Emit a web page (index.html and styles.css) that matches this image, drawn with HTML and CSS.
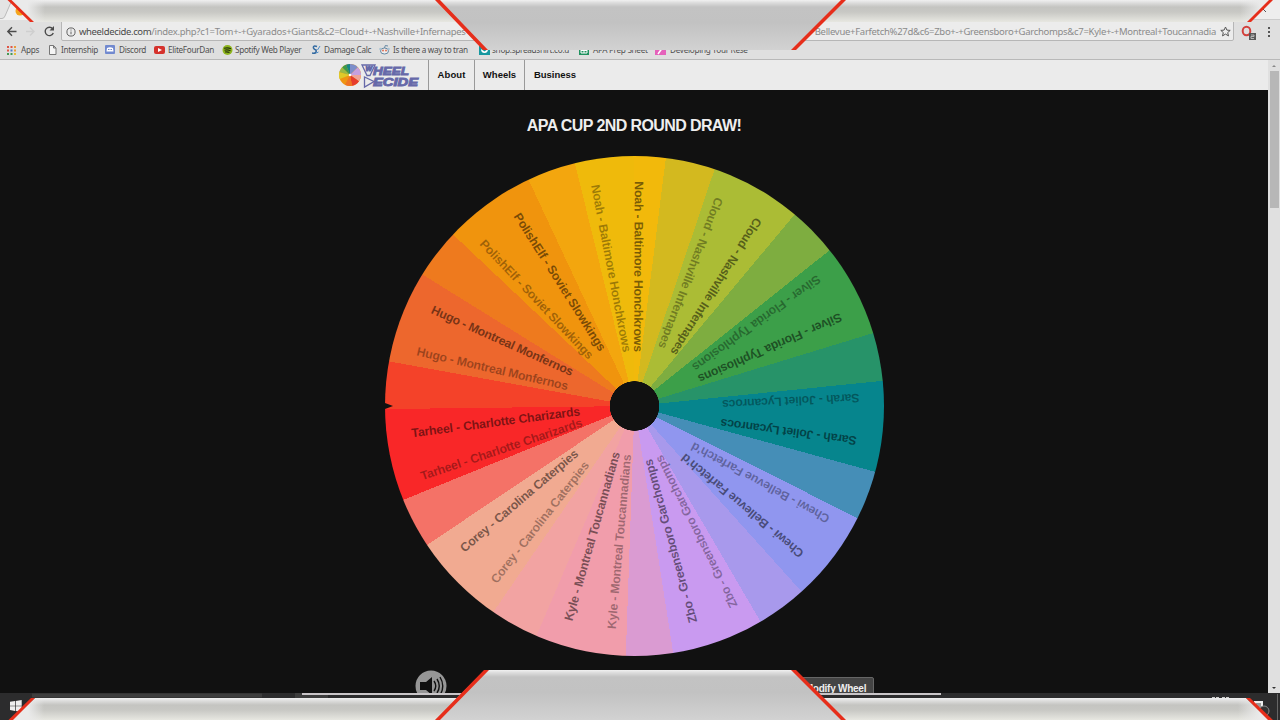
FILE: index.html
```html
<!DOCTYPE html>
<html lang="en">
<head>
<meta charset="utf-8">
<title>Wheel Decide</title>
<link rel="stylesheet" href="styles.css">
</head>
<body>
<div class="screen">
  <header class="browser">
    <div class="tabstrip"><svg width="1280" height="20"><path d="M0 18.500H2Q4 18.500 5 16L12 0H40V20H0Z" fill="#efefef"/><path d="M0 18.500H2Q4 18.500 5 16L12 0" fill="none" stroke="#bbb"/><circle cx="20" cy="11" r="4.500" fill="#f4a51c"/><path d="M1250 0H1280V19H1250Z" fill="#eee"/><path d="M1262 8l4 4" stroke="#555"/><path d="M1245 19.500H1280" stroke="#ccc"/></svg></div>
    <div class="toolbar">
      <svg class="nav-icons" width="60" height="22" fill="none" stroke-width="1.400"><path d="M16.500 11.500H8M12 7.300L7.800 11.500L12 15.700" stroke="#4b4b4b"/><path d="M26 11.500h8M30 7.500l4 4-4 4" stroke="#cfcfcf"/><path d="M52.700 8.800A4.200 4.200 0 1 0 53.300 13" stroke="#4b4b4b"/><path d="M54 6v4.500h-4.500z" fill="#4b4b4b"/></svg>
      <div class="address">
        <svg class="info" width="10" height="10" viewBox="0 0 11 11" fill="none" stroke="#555"><circle cx="5.500" cy="5.500" r="4.500"/><path d="M5.500 5V8M5.500 2.800v1.100"/></svg>
        <span class="url"><b>wheeldecide.com</b>/index.php?c1=Tom+-+Gyarados+Giants&amp;c2=Cloud+-+Nashville+Infernapes</span>
        <span class="url url-end">Bellevue+Farfetch%27d&amp;c6=Zbo+-+Greensboro+Garchomps&amp;c7=Kyle+-+Montreal+Toucannadia</span>
        <svg class="star" width="11" height="11" viewBox="0 0 11 11"><path d="M5.500 1L6.900 4.100 10.200 4.400 7.700 6.600 8.500 9.900 5.500 8.100 2.500 9.900 3.300 6.600.8 4.400 4.100 4.100Z" fill="none" stroke="#555"/></svg>
      </div>
      <svg class="extensions" width="45" height="22"><ellipse cx="12.500" cy="11" rx="3.800" ry="4.300" fill="none" stroke="#d2403c" stroke-width="2"/><rect x="15" y="13" width="7" height="7" fill="#585858"/><path d="M17 15h3v1.500h-3v2h3" stroke="#ccc" fill="none" stroke-width=".8"/><path d="M34 7h2v2h-2zm0 4h2v2h-2zm0 4h2v2h-2z" fill="#555"/></svg>
    </div>
    <nav class="bookmarks">
      <svg class="i-apps" width="9" height="9"><path d="M0 0h2v2H0zM3.500 0h2v2h-2zM0 3.500h2v2H0z" fill="#df5546"/><path d="M7 0h2v2H7zM7 3.500h2v2H7z" fill="#e99a37"/><path d="M3.500 3.500h2v2h-2z" fill="#4c79c7"/><path d="M0 7h2v2H0zM3.500 7h2v2h-2z" fill="#459a55"/><path d="M7 7h2v2H7z" fill="#e7be39"/></svg><span class="w-apps">Apps</span>
      <svg class="i-page" width="8" height="10"><path d="M.5.500h4L7 3v6.500H.5zM4.500.5V3H7" fill="#f5f5f5" stroke="#777"/></svg><span class="w-intern">Internship</span>
      <svg class="i-disc" width="10" height="10"><rect width="10" height="9" rx="1" fill="#7189cf"/><path d="M2 3q3-1.500 6 0l.5 3.500h-7z" fill="#fff"/><path d="M3 4.500h1.500M5.500 4.500H7" stroke="#7189cf"/></svg><span class="w-disc">Discord</span>
      <svg class="i-yt" width="11" height="10"><rect y="1" width="11" height="8" rx="2" fill="#d5322c"/><path d="M4 3l4 2-4 2z" fill="#fff"/></svg><span class="w-elite">EliteFourDan</span>
      <svg class="i-spot" width="11" height="10"><circle cx="5.500" cy="5" r="5" fill="#8eb51d"/><path d="M2 3.300q4-1 7 .4M2.500 5.200q3-.8 6 .5M3 7q2.500-.5 4.500.5" stroke="#26350b" fill="none" stroke-width="1.100"/></svg><span class="w-spot">Spotify Web Player</span>
      <svg class="i-calc" width="9" height="10"><path d="M5 1.500Q1 0 1.500 3Q2 4.500 4 5Q5 9 0 8" stroke="#336aa1" fill="none" stroke-width="1.600"/><path d="M4.500 8l2-1M8 1L5.500 5" stroke="#4c8dca"/></svg><span class="w-calc">Damage Calc</span>
      <svg class="i-reddit" width="11" height="10"><ellipse cx="5.500" cy="6" rx="4" ry="3" fill="#eee" stroke="#6688a3"/><circle cx="1.500" cy="4" r="1.300" fill="#a9c2d4"/><circle cx="9.500" cy="4" r="1.300" fill="#a9c2d4"/><path d="M5.500 3l.8-2.500L9 1" fill="none" stroke="#6688a3"/><circle cx="4" cy="5.500" r=".9" fill="#df6547"/><circle cx="7" cy="5.500" r=".9" fill="#df6547"/></svg><span class="w-reddit">Is there a way to tran</span>
      <svg class="i-shop" width="11" height="10"><rect width="11" height="10" fill="#1698a0"/><path d="M2 4q0 4 3.500 4T9 4L5.500 6.500z" fill="#fff"/></svg><span class="w-shop">shop.spreadshirt.co.u</span>
      <svg class="i-sheet" width="10" height="10"><rect width="10" height="10" fill="#219260"/><path d="M2 3h6v5H2zM2 5.500h6M5 3v5" fill="none" stroke="#fff"/></svg><span class="w-sheet">APA Prep Sheet</span>
      <svg class="i-pink" width="11" height="10"><rect width="11" height="10" fill="#e562bb"/><path d="M3 9l5-7" stroke="#fff" stroke-width="1.500"/></svg><span>Developing Your Rese</span>
    </nav>
  </header>

  <div class="viewport">
    <main class="page">
      <nav class="menu">
        <svg class="logo" width="89" height="30">
          <g transform="translate(11 15)"><circle r="11" fill="#ef9512"/><path d="M0 0V-11A11 11 0 0 1 7.800-7.800Z" fill="#7c8eca"/><path d="M0 0L7.800-7.800A11 11 0 0 1 11 0Z" fill="#c5a0df"/><path d="M0 0H11A11 11 0 0 1 9 6.300Z" fill="#eea499"/><path d="M0 0L9 6.300A11 11 0 0 1 2 10.800Z" fill="#e63c2d"/><path d="M0 0L2 10.800A11 11 0 0 1-5 9.800Z" fill="#ef7424"/><path d="M0 0L-10.300 4A11 11 0 0 1-10.600-3Z" fill="#dfca29"/><path d="M0 0L-10.600-3A11 11 0 0 1-7.800-7.800Z" fill="#9aba45"/><path d="M0 0L-7.800-7.800A11 11 0 0 1-4-10.300Z" fill="#3b9b4a"/><path d="M0 0L-4-10.300A11 11 0 0 1 0-11Z" fill="#168587"/><circle r="1.300" fill="#fff"/></g>
          <g fill="none" stroke="#6669a9" stroke-width="1.300"><path d="M23 5H36L31 15.500H28Z"/><path d="M25.500 17V27L35 21.500Z"/></g>
          <g class="logo-text"><text x="26.500" y="11" font-size="7">W</text><text x="34" y="15" textLength="36" lengthAdjust="spacingAndGlyphs">HEEL</text><text x="34" y="26" textLength="45" lengthAdjust="spacingAndGlyphs">ECIDE</text></g>
        </svg>
        <a class="about">About</a><a class="wheels">Wheels</a><a class="business">Business</a>
      </nav>
      <h1>APA CUP 2ND ROUND DRAW!</h1>
      <div class="wheel"><svg id="labels" width="499" height="500"><path d="M0 247L8 250L0 253Z" fill="#111"/></svg></div>
      <div class="controls">
        <svg width="32" height="32"><circle cx="16" cy="16" r="15.500" fill="#969696"/><path d="M5 12h6l6-5v18l-6-5H5z" fill="#111"/><path d="M19 11q3.500 5 0 10M22 9q4.500 7 0 14M25 7q5.500 9 0 18" fill="none" stroke="#111" stroke-width="1.400"/></svg>
        <button>Modify Wheel</button>
      </div>
    </main>
    <aside class="scrollbar"><i class="up"></i><div class="thumb"></div><i class="down"></i></aside>
  </div>
  <footer class="taskbar"></footer>

  <svg class="frame" width="1280" height="720">
    <defs>
      <linearGradient id="side" x1="0" y1="0" x2="0" y2="1"><stop offset="0" stop-color="#f0f0f0"/><stop offset=".16" stop-color="#d9d9d8"/><stop offset=".32" stop-color="#c4c4c1"/><stop offset=".55" stop-color="#c8c8c4"/><stop offset="1" stop-color="#e7e7e1"/></linearGradient>
      <linearGradient id="center" x1="0" y1="0" x2="0" y2="1"><stop offset="0" stop-color="#f1f1f1"/><stop offset=".05" stop-color="#dedede"/><stop offset=".14" stop-color="#c3c3c3"/><stop offset=".45" stop-color="#c2c2c2"/><stop offset="1" stop-color="#d2d2d2"/></linearGradient>
      <linearGradient id="fadeL"><stop offset=".5" stop-color="#eaeaea"/><stop offset="1" stop-color="#eaeaea" stop-opacity="0"/></linearGradient>
      <linearGradient id="fadeR"><stop offset="0" stop-color="#eaeaea" stop-opacity="0"/><stop offset=".7" stop-color="#eaeaea"/></linearGradient>
    </defs>
    <path d="M24 0H1270L1247 22H33L24 13Z" fill="url(#side)"/><path d="M10 0H45V22H33Z" fill="url(#fadeL)"/><path d="M1240 0H1270L1247 22H1240Z" fill="url(#fadeR)"/>
    <path d="M435 0H845L794 50H487Z" fill="url(#center)"/>
    <path d="M7.500 0H11.500L34 22H30ZM435 0H440L488 50H483ZM841 0H846L796 50H791ZM1269 0H1273L1251 22H1247Z" fill="#e62e1b"/>
    <rect y="693" width="1280" height="5" fill="#2c2c2d"/><path d="M32 693.500H262V697.500H32Z" fill="#3d3d3d"/><path d="M295 693h33v5h-33z" fill="#3d3d3d"/><path d="M302 693H941V695H302Z" fill="#c9c5c8"/>
    <path d="M10 701.800l5-.8v4.700h-5zM15.700 700.900l6-1v5.800h-6zM10 706.300h5v4.600l-5-.8zM15.700 706.300h6v5.800l-6-1z" fill="#eee"/>
    <path d="M1254 701h9v8h-9z" fill="#eee"/><path d="M1256 704h5M1256 706h5" stroke="#444"/><circle cx="1264" cy="711" r="5" fill="#333" stroke="#888"/><path d="M1277.500 694v26" stroke="#666"/><path d="M1212 697.500h7M1222 697.500h7" stroke="#ccc" stroke-dasharray="3 1"/>
    <path d="M35 698H1246L1269 720H12Z" fill="url(#side)"/><path d="M35 698H44V720H12Z" fill="url(#fadeL)"/><path d="M1238 698H1246L1269 720H1238Z" fill="url(#fadeR)"/>
    <path d="M485 670H795L845 720H435Z" fill="url(#center)"/>
    <path d="M31 698H35L13 720H8.500ZM484 670H489L440 720H435ZM791 670H796L846 720H841ZM1246 698H1250L1273 720H1268Z" fill="#e62e1b"/>
  </svg>
</div>
<script src="wheel.js"></script>
</body>
</html>
```
FILE: wheel.js
```js
// Each label runs from its rim point to its hub point; faint ones trail the spin.
const labels = [
  ["Hugo - Montreal Monfernos", 432, 309.3, 572.7, 372.5, 0],
  ["Hugo - Montreal Monfernos", 417, 351.3, 568, 386.3, 1],
  ["PolishElf - Soviet Slowkings", 516.7, 214.2, 602.7, 350, 0],
  ["PolishElf - Soviet Slowkings", 482, 241.7, 591, 357.3, 1],
  ["Noah - Baltimore Honchkrows", 595, 184.7, 626.9, 352, 1],
  ["Noah - Baltimore Honchkrows", 638.7, 181.3, 638, 352, 0],
  ["Cloud - Nashville Infernapes", 719, 198, 661.8, 348, 1],
  ["Cloud - Nashville Infernapes", 758.5, 219, 673.4, 354.3, 0],
  ["Silver - Florida Typhlosions", 819, 277.8, 693.5, 368.5, 1],
  ["Silver - Florida Typhlosions", 841, 316.5, 698.7, 379.5, 0],
  ["Sarah - Joliet Lycanrocs", 859.5, 397.7, 722, 404.3, 1],
  ["Sarah - Joliet Lycanrocs", 856.5, 440.7, 720.5, 422.7, 0],
  ["Chewi - Bellevue Farfetch'd", 828.7, 519.7, 692, 445.3, 1],
  ["Chewi - Bellevue Farfetch'd", 802, 555, 683, 456, 0],
  ["Zbo - Greensboro Garchomps", 734.3, 607, 658.5, 456, 1],
  ["Zbo - Greensboro Garchomps", 693.3, 622.6, 648, 459.5, 0],
  ["Kyle - Montreal Toucannadians", 568.5, 620.5, 616.2, 452, 0],
  ["Kyle - Montreal Toucannadians", 611.7, 629, 627, 454.3, 1],
  ["Corey - Carolina Caterpies", 462, 549.7, 576.5, 452, 0],
  ["Corey - Carolina Caterpies", 493.5, 581.7, 586.5, 463, 1],
  ["Tarheel - Charlotte Charizards", 411.5, 433.3, 580, 411.3, 0],
  ["Tarheel - Charlotte Charizards", 421, 476.5, 582, 422.3, 1]
];
const originX = 385, originY = 156;
const svg = document.getElementById("labels");
for (const [name, x1, y1, x2, y2, faint] of labels) {
  const t = document.createElementNS("http://www.w3.org/2000/svg", "text");
  const angle = Math.atan2(y2 - y1, x2 - x1) * 180 / Math.PI;
  t.setAttribute("transform", `translate(${x1 - originX} ${y1 - originY}) rotate(${angle})`);
  t.setAttribute("y", "4");
  t.setAttribute("textLength", Math.hypot(x2 - x1, y2 - y1));
  t.setAttribute("class", faint ? "label faint" : "label");
  t.textContent = name;
  svg.appendChild(t);
}
```
FILE: styles.css
```css
* { box-sizing: border-box; }
body { margin: 0; background: #111; font-family: "Liberation Sans", Arial, sans-serif; }
svg { display: block; flex-shrink: 0; }
.screen { width: 1280px; height: 720px; position: relative; overflow: hidden; display: flex; flex-direction: column; }
.browser { height: 60px; flex-shrink: 0; background: #dfdfdf; border-bottom: 1px solid #b8b8b8; font-family: "Noto Sans", sans-serif; }
.tabstrip { height: 20px; background: #e4e4e4; }
.toolbar { height: 21px; display: flex; }
.address { width: 1173px; margin-left: 1px; height: 21px; border: 1px solid #b6b6b6; border-radius: 2px; background: #ececec; display: flex; align-items: center; padding: 2px 2px 0 4px; }
.extensions { margin-left: 0; }
.url { margin-left: 3px; font-size: 9.5px; letter-spacing: -.29px; line-height: 16px; color: #8a8a8a; white-space: nowrap; }
.url b { font-weight: 400; color: #4a4a4a; letter-spacing: -.36px; }
.url-end { margin-left: auto; }
.star { margin-left: 4px; }
.bookmarks { height: 18px; padding-left: 7px; display: flex; align-items: center; white-space: nowrap; font-size: 8.2px; letter-spacing: -.3px; line-height: 16px; color: #505050; }
.bookmarks span { flex-shrink: 0; }
.bookmarks svg { margin-right: 4px; }
.bookmarks .i-apps { margin-right: 5px; }
.bookmarks .i-calc, .bookmarks .i-yt, .bookmarks .i-reddit { margin-right: 3px; }
.bookmarks .i-spot, .bookmarks .i-shop { margin-right: 2px; }
.w-apps { width: 28px; } .w-intern { width: 44px; }
.w-disc { width: 35px; } .w-elite { width: 54px; }
.w-spot { width: 77px; } .w-calc { width: 55px; }
.w-reddit { width: 86px; }
.w-shop { width: 87px; } .w-sheet { width: 62px; }
.viewport { height: 633px; flex-shrink: 0; display: flex; }
.page { width: 1268px; overflow: hidden; }
.menu { height: 30px; background: #ebebeb; padding-left: 339px; display: flex; font: bold 9.5px/30px "Liberation Sans", Arial, sans-serif; color: #111; }
.menu a { border-left: 1px solid #999; text-align: center; }
.about { width: 46px; letter-spacing: .1px; } .wheels { width: 50px; } .business { width: 61px; }
.logo-text { font: italic bold 11px "Liberation Sans", Arial, sans-serif; fill: #6669a9; stroke: #6669a9; stroke-width: .9; }
h1 { margin: 26px 0 20px; font-size: 16px; letter-spacing: -.6px; line-height: 20px; text-align: center; color: #eee; }
.wheel {
  width: 499px; height: 500px; margin-left: 385px; border-radius: 50%;
  background: radial-gradient(circle, #111 24.5px, transparent 25px), conic-gradient(#f2b90b 7.2deg, #d3b91f 0 18.700deg, #abbc35 0 39.900deg, #7ead40 0 51.400deg, #3c9f49 0 73deg, #279369 0 84.200deg, #06858d 0 105.300deg, #458eb7 0 116.700deg, #9096ef 0 138deg, #a899ec 0 149.700deg, #c99af0 0 171.100deg, #da9bd2 0 182deg, #f19dab 0 203.100deg, #f2a3a2 0 214.400deg, #f1aa91 0 236.200deg, #f47267 0 247.900deg, #f92728 0 269.300deg, #f44229 0 280.300deg, #ed672d 0 301.800deg, #ee7a1e 0 313.400deg, #f0940d 0 334.900deg, #f3a60e 0 346.200deg, #efba0b 0);
}
.label { font: bold 12.3px "Liberation Sans", Arial, sans-serif; fill: #000; fill-opacity: .5; }
.label.faint { fill-opacity: .34; }
.controls { display: flex; justify-content: space-between; width: 459px; margin: 14px 0 0 415px; }
.controls button { width: 77px; height: 22px; margin-top: 7px; padding: 0; border: 1px solid #666; border-radius: 2px; background: #444; color: #eee; font: bold 10px "Liberation Sans", Arial, sans-serif; letter-spacing: -.25px; }
.scrollbar { width: 12px; background: #e0e0e0; display: flex; flex-direction: column; align-items: center; }
.thumb { width: 9px; height: 137px; background: #b7b7b7; margin-top: 4px; }
.up, .down { width: 0; height: 0; border: 2.5px solid transparent; }
.up { border-top: 0; border-bottom-color: #888; margin-top: 5px; }
.down { border-bottom: 0; border-top-color: #333; margin-top: auto; margin-bottom: 4px; }
.taskbar { height: 27px; background: #2c2c2d; }
.frame { position: absolute; left: 0; top: 0; }
```
